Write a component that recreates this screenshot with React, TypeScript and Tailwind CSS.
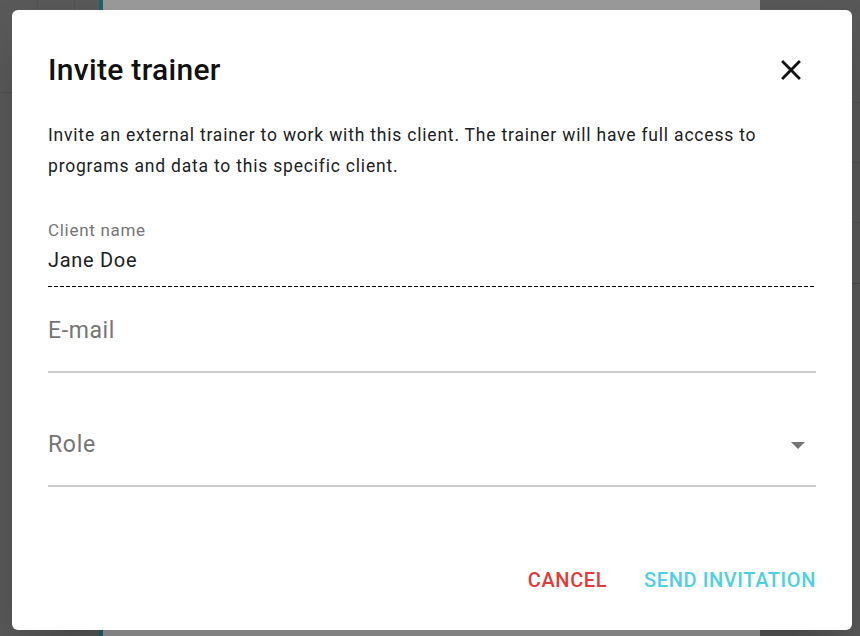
import React from "react";

export default function App() {
  return (
    <div className="relative w-[860px] h-[636px] overflow-hidden flex font-['Roboto',sans-serif]">
      {/* dimmed page behind the dialog */}
      <div className="w-[99px] bg-[#595959] flex flex-col">
        <div className="h-[93px] flex border-b border-[#4e4e4e]">
          <div className="w-[38px] border-r border-[#525252]" />
          <div className="w-[37px] border-r border-[#525252]" />
          <div className="flex-1" />
        </div>
      </div>
      <div className="w-[4px] bg-[#22606a]" />
      <div className="w-[657px] bg-[#9a9a9a]" />
      <div className="flex-1 bg-[#585858] flex flex-col">
        <div className="h-[103px] border-b border-[#515151]" />
        <div className="h-[60px] border-b border-[#515151]" />
        <div className="h-[60px] border-b border-[#515151]" />
        <div className="h-[61px] border-b border-[#4a4a4a]" />
      </div>

      {/* dialog */}
      <div className="absolute left-[12px] top-[10px] w-[840px] h-[620px] rounded-[6px] bg-white shadow-2xl px-[36px] pt-[42px] flex flex-col">
        <div className="flex items-center justify-between h-[36px]">
          <h2 className="text-[30px] leading-[36px] font-medium tracking-[0.3px] text-[#111]">
            Invite trainer
          </h2>
          <svg className="mr-[8px]" width="34" height="34" viewBox="0 0 24 24" fill="#111">
            <path d="M19 6.41L17.59 5 12 10.59 6.41 5 5 6.41 10.59 12 5 17.59 6.41 19 12 13.41 17.59 19 19 17.59 13.41 12z" />
          </svg>
        </div>

        <p className="mt-[32px] text-[17.5px] leading-[31px] tracking-[0.8px] text-[#212121] whitespace-nowrap">
          Invite an external trainer to work with this client. The trainer will have full access to
          <br />
          programs and data to this specific client.
        </p>

        <div className="mt-[38px] text-[17px] leading-[20px] tracking-[0.7px] text-[#757575]">
          Client name
        </div>
        <div className="mt-[8px] text-[20px] leading-[24px] tracking-[0.7px] text-[#212121]">
          Jane Doe
        </div>
        <div className="mt-[14px] h-[1px] bg-[repeating-linear-gradient(to_right,#000_0px,#000_4px,transparent_4px,transparent_6px)]" />

        <div className="mt-[30px] text-[23px] leading-[28px] tracking-[0.6px] text-[#757575]">
          E-mail
        </div>
        <div className="mt-[26px] h-[2px] bg-[#cccccc]" />

        <div className="mt-[58px] flex items-center justify-between">
          <span className="text-[23px] leading-[28px] tracking-[0.7px] text-[#757575]">Role</span>
          <svg className="mr-[11px]" width="14" height="7" viewBox="0 0 10 5" fill="#757575">
            <path d="M0 0l5 5 5-5z" />
          </svg>
        </div>
        <div className="mt-[26px] h-[2px] bg-[#cccccc]" />

        <div className="mt-[81px] flex justify-end gap-[37px] text-[20px] leading-[24px] font-medium tracking-[0.6px] uppercase">
          <span className="text-[#e53935]">Cancel</span>
          <span className="text-[#4dd0e1]">Send invitation</span>
        </div>
      </div>
    </div>
  );
}
